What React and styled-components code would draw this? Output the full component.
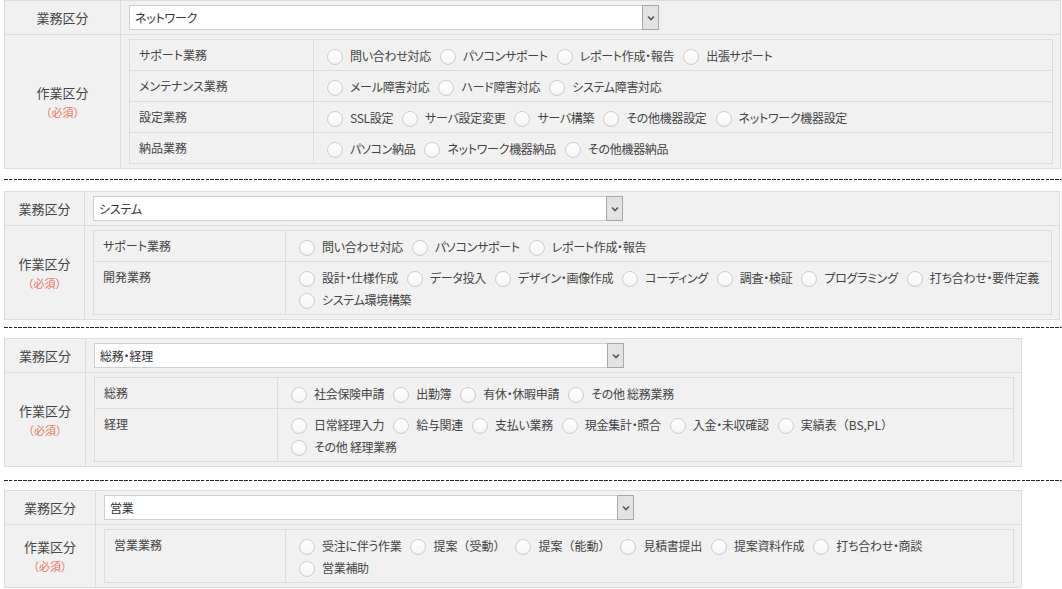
import React from "react";
import styled, { createGlobalStyle } from "styled-components";

const GlobalStyle = createGlobalStyle`
  body {
    margin: 0;
    background: #fff;
    color: #444;
    font-family: "Noto Sans CJK JP", "Noto Sans", sans-serif;
    font-size: 13px;
    font-feature-settings: "palt";
  }
`;

const Page = styled.div`
  padding-left: 4px;
  overflow: hidden;
`;

const Section = styled.div`
  width: ${(p) => p.$width}px;
  box-sizing: border-box;
  border: 1px solid #dcdcdc;
  background: #f1f1f1;
`;

const Row = styled.div`
  display: grid;
  grid-template-columns: ${(p) => p.$label}px 1fr;

  & + & {
    border-top: 1px solid #dcdcdc;
  }
`;

const HeadCell = styled.div`
  box-sizing: border-box;
  border-right: 1px solid #dcdcdc;
  display: flex;
  flex-direction: column;
  align-items: center;
  justify-content: center;
  line-height: 20px;
`;

const Required = styled.span`
  color: #e8735f;
  font-size: 11px;
  line-height: 18px;
  font-feature-settings: normal;
`;

const ValueCell = styled.div`
  padding: 4px 7px 4px 8px;
  min-width: 0;
`;

const SelectWrap = styled.div`
  position: relative;
  width: 530px;
  height: 25px;
`;

const Select = styled.select`
  appearance: none;
  display: block;
  width: 100%;
  height: 100%;
  box-sizing: border-box;
  border: 1px solid #cfcfcf;
  border-radius: 0;
  background: #fff;
  padding: 0 20px 0 5px;
  font: inherit;
  font-size: 12px;
  letter-spacing: -0.2px;
  color: #333;
  outline: none;
`;

const Arrow = styled.span`
  position: absolute;
  top: 0;
  right: 0;
  width: 17px;
  height: 25px;
  box-sizing: border-box;
  border: 1px solid #a8a8a8;
  background: #e3e3e3;
  display: flex;
  align-items: center;
  justify-content: center;
  pointer-events: none;
`;

const SubTable = styled.div`
  border: 1px solid #dcdcdc;
`;

const SubLabel = styled.div`
  box-sizing: border-box;
  border-right: 1px solid #dcdcdc;
  padding: 4px 8px 0 9px;
  font-size: 12px;
  line-height: 22px;
`;

const Options = styled.div`
  display: flex;
  flex-wrap: wrap;
  padding: 5px 1px 3px 13px;
  font-size: 12px;
  letter-spacing: -0.3px;
  line-height: 22px;
`;

const Option = styled.label`
  display: inline-flex;
  align-items: center;
  height: 22px;
  margin-right: ${(p) => (p.$plain ? 10 : 9)}px;
  white-space: nowrap;
  letter-spacing: ${(p) => (p.$plain ? "0" : "-0.3px")};
  font-feature-settings: ${(p) => (p.$plain ? "normal" : "\"palt\"")};
`;

const LineBreak = styled.div`
  flex-basis: 100%;
  height: 0;
`;

const Radio = styled.input`
  appearance: none;
  flex: none;
  width: 16px;
  height: 16px;
  margin: 2px 7px 0 0;
  box-sizing: border-box;
  border: 1px solid #cdcdcd;
  border-radius: 50%;
  background: linear-gradient(#fff, #f6f6f6);
  box-shadow: inset 0 -1px 1px rgba(0, 0, 0, 0.03);
`;

const Divider = styled.div`
  height: 1px;
  margin: ${(p) => p.$above}px 0 ${(p) => p.$below}px;
  background: repeating-linear-gradient(
    90deg,
    #222 0 3.6px,
    transparent 3.6px 4.8px
  );
`;

const CATEGORIES = ["ネットワーク", "システム", "総務・経理", "営業"];

// groups: [label, items, index of the item that starts the second line]
const sections = [
  {
    id: "net",
    value: "ネットワーク",
    width: 1057,
    head: 116,
    sub: 184,
    gap: [10, 11],
    groups: [
      ["サポート業務", ["問い合わせ対応", "パソコンサポート", "レポート作成・報告", "出張サポート"]],
      ["メンテナンス業務", ["メール障害対応", "ハード障害対応", "システム障害対応"]],
      ["設定業務", ["SSL設定", "サーバ設定変更", "サーバ構築", "その他機器設定", "ネットワーク機器設定"]],
      ["納品業務", ["パソコン納品", "ネットワーク機器納品", "その他機器納品"]],
    ],
  },
  {
    id: "sys",
    value: "システム",
    width: 1056,
    head: 80,
    sub: 192,
    gap: [7, 10],
    groups: [
      ["サポート業務", ["問い合わせ対応", "パソコンサポート", "レポート作成・報告"]],
      [
        "開発業務",
        ["設計・仕様作成", "データ投入", "デザイン・画像作成", "コーディング", "調査・検証", "プログラミング", "打ち合わせ・要件定義", "システム環境構築"],
        7,
      ],
    ],
  },
  {
    id: "gen",
    value: "総務・経理",
    width: 1018,
    head: 81,
    sub: 183,
    gap: [13, 9],
    groups: [
      ["総務", ["社会保険申請", "出勤簿", "有休・休暇申請", "その他 総務業務"]],
      ["経理", ["日常経理入力", "給与関連", "支払い業務", "現金集計・照合", "入金・未収確認", "実績表（BS,PL）", "その他 経理業務"], 6],
    ],
  },
  {
    id: "sales",
    value: "営業",
    width: 1018,
    head: 91,
    sub: 181,
    groups: [
      ["営業業務", ["受注に伴う作業", "提案（受動）", "提案（能動）", "見積書提出", "提案資料作成", "打ち合わせ・商談", "営業補助"], 6],
    ],
  },
];

function Chevron() {
  return (
    <svg width="8" height="6" viewBox="0 0 8 6">
      <polyline points="1,1.5 4,4.5 7,1.5" fill="none" stroke="#555" strokeWidth="1.6" />
    </svg>
  );
}

function WorkSection({ section }) {
  return (
    <Section $width={section.width}>
      <Row $label={section.head}>
        <HeadCell>業務区分</HeadCell>
        <ValueCell>
          <SelectWrap>
            <Select defaultValue={section.value}>
              {CATEGORIES.map((c) => (
                <option key={c}>{c}</option>
              ))}
            </Select>
            <Arrow>
              <Chevron />
            </Arrow>
          </SelectWrap>
        </ValueCell>
      </Row>
      <Row $label={section.head}>
        <HeadCell>
          作業区分
          <Required>（必須）</Required>
        </HeadCell>
        <ValueCell>
          <SubTable>
            {section.groups.map(([label, items, breakAt]) => (
              <Row key={label} $label={section.sub}>
                <SubLabel>{label}</SubLabel>
                <Options>
                  {items.map((item, i) => (
                    <React.Fragment key={item}>
                      {i === breakAt && <LineBreak />}
                      <Option $plain={/[（）]/.test(item)}>
                        <Radio type="radio" name={`${section.id}-work`} />
                        {item}
                      </Option>
                    </React.Fragment>
                  ))}
                </Options>
              </Row>
            ))}
          </SubTable>
        </ValueCell>
      </Row>
    </Section>
  );
}

export default function App() {
  return (
    <>
      <GlobalStyle />
      <Page>
        {sections.map((s) => (
          <React.Fragment key={s.id}>
            <WorkSection section={s} />
            {s.gap && <Divider $above={s.gap[0]} $below={s.gap[1]} />}
          </React.Fragment>
        ))}
      </Page>
    </>
  );
}
